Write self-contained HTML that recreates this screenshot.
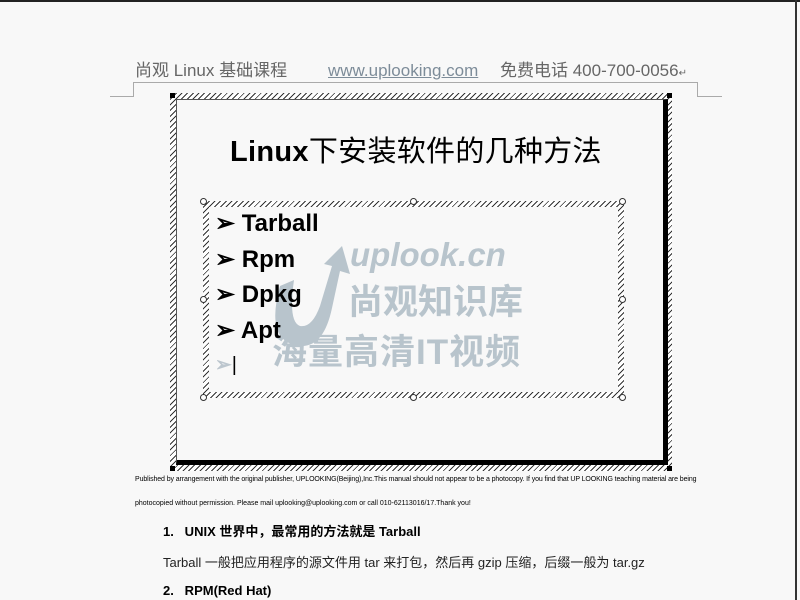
<!DOCTYPE html>
<html><head><meta charset="utf-8"><style>
body{margin:0;width:800px;height:600px;background:#f8f8f8;position:relative;overflow:hidden;font-family:"Liberation Sans","Noto Sans CJK SC",sans-serif}
.a{position:absolute;white-space:nowrap}
.hatch{background:repeating-linear-gradient(135deg,#333 0 1px,#fff 1px 4px)}
.h{line-height:20px}
</style></head><body>
<div class="a" style="left:0;top:0;width:800px;height:2px;background:#222"></div>
<div class="a" style="left:795px;top:0;width:2px;height:600px;background:#333"></div>
<div class="a h" style="left:135px;top:61px;font-size:17px;color:#666">尚观 Linux 基础课程</div>
<div class="a h" style="left:328px;top:61px;font-size:17px;color:#7d8c99;text-decoration:underline">www.uplooking.com</div>
<div class="a h" style="left:500px;top:61px;font-size:17px;color:#666">免费电话 400-700-0056<span style="font-size:10px">↵</span></div>
<div class="a" style="left:133px;top:82px;width:564px;height:1px;background:#aaa"></div>
<div class="a" style="left:133px;top:82px;width:1px;height:14px;background:#aaa"></div>
<div class="a" style="left:110px;top:96px;width:24px;height:1px;background:#aaa"></div>
<div class="a" style="left:697px;top:82px;width:1px;height:14px;background:#aaa"></div>
<div class="a" style="left:697px;top:96px;width:25px;height:1px;background:#aaa"></div>
<div class="a hatch" style="left:170px;top:93px;width:502px;height:378px"></div>
<div class="a" style="left:176px;top:99px;width:486px;height:360px;background:#f8f8f8;border:1px solid #555;border-right:5px solid #000;border-bottom:5px solid #000"></div>
<div class="a" style="left:170px;top:93px;width:5px;height:5px;background:#000"></div>
<div class="a" style="left:667px;top:93px;width:5px;height:5px;background:#000"></div>
<div class="a" style="left:667px;top:466px;width:5px;height:5px;background:#000"></div>
<div class="a" style="left:170px;top:466px;width:5px;height:5px;background:#000"></div>
<div class="a" style="left:230px;top:128px;font-size:29px;color:#000;letter-spacing:0.3px"><b>Linux</b>下安装软件的几种方法</div>
<div class="a hatch" style="left:203px;top:201px;width:421px;height:197px"></div>
<div class="a" style="left:209px;top:207px;width:409px;height:185px;background:#f8f8f8"></div>
<svg class="a" style="left:262px;top:246px" width="90" height="105"><path d="M18 40 Q2 98 40 100 Q62 100 70 62 L78 25 L88 28 L80 0 L62 18 L70 20 L58 60 Q50 82 38 80 Q26 76 32 34 Z" fill="#b8c4cc"/></svg>
<div class="a" style="left:350px;top:236px;font-size:33px;font-weight:bold;font-style:italic;color:#b8c4cc">uplook.cn</div>
<div class="a" style="left:348px;top:274px;font-size:35px;font-weight:bold;color:#b8c4cc">尚观知识库</div>
<div class="a" style="left:272px;top:324px;font-size:35px;font-weight:bold;color:#b8c4cc;letter-spacing:1px">海量高清IT视频</div>
<div class="a" style="left:215px;top:206px;font-size:24px;font-weight:bold;line-height:35.5px;color:#000">
<div>➢ Tarball</div><div>➢ Rpm</div><div>➢ Dpkg</div><div>➢ Apt</div><div style="color:#bcc6ce;font-size:20px">➢<span style="color:#000;font-weight:normal">|</span></div></div>
<div class="a" style="left:200px;top:198px;width:5px;height:5px;border:1px solid #333;border-radius:50%;background:#fff"></div>
<div class="a" style="left:410px;top:198px;width:5px;height:5px;border:1px solid #333;border-radius:50%;background:#fff"></div>
<div class="a" style="left:619px;top:198px;width:5px;height:5px;border:1px solid #333;border-radius:50%;background:#fff"></div>
<div class="a" style="left:200px;top:296px;width:5px;height:5px;border:1px solid #333;border-radius:50%;background:#fff"></div>
<div class="a" style="left:619px;top:296px;width:5px;height:5px;border:1px solid #333;border-radius:50%;background:#fff"></div>
<div class="a" style="left:200px;top:394px;width:5px;height:5px;border:1px solid #333;border-radius:50%;background:#fff"></div>
<div class="a" style="left:410px;top:394px;width:5px;height:5px;border:1px solid #333;border-radius:50%;background:#fff"></div>
<div class="a" style="left:619px;top:394px;width:5px;height:5px;border:1px solid #333;border-radius:50%;background:#fff"></div>
<div class="a" style="left:135px;top:476px;font-size:7px;color:#000;letter-spacing:-0.1px">Published by arrangement with the original publisher, UPLOOKING(Beijing),Inc.This manual should not appear to be a photocopy. If you find that UP LOOKING teaching material are being</div>
<div class="a" style="left:135px;top:500px;font-size:7px;color:#000">photocopied without permission. Please mail uplooking@uplooking.com or call 010-62113016/17.Thank you!</div>
<div class="a" style="left:163px;top:521px;font-size:13px;font-weight:bold;color:#000">1.&nbsp;&nbsp;&nbsp;UNIX 世界中，最常用的方法就是 Tarball</div>
<div class="a" style="left:163px;top:552px;font-size:13px;color:#222">Tarball 一般把应用程序的源文件用 tar 来打包，然后再 gzip 压缩，后缀一般为 tar.gz</div>
<div class="a" style="left:163px;top:583px;font-size:13px;font-weight:bold;color:#000">2.&nbsp;&nbsp;&nbsp;RPM(Red Hat)</div>
</body></html>
